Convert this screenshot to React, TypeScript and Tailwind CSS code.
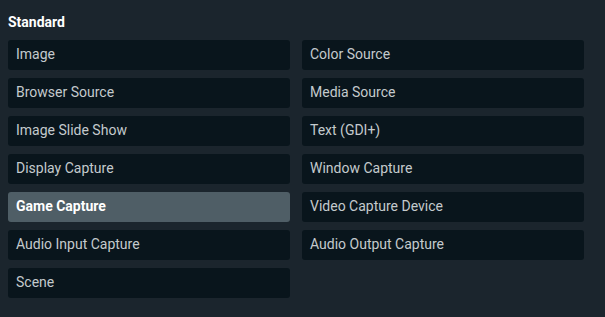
const left = [
  "Image",
  "Browser Source",
  "Image Slide Show",
  "Display Capture",
  "Game Capture",
  "Audio Input Capture",
  "Scene",
];

const right = [
  "Color Source",
  "Media Source",
  "Text (GDI+)",
  "Window Capture",
  "Video Capture Device",
  "Audio Output Capture",
];

function SourceItem({ label, active }: { label: string; active?: boolean }) {
  return (
    <div
      className={
        active
          ? "h-[30px] flex items-center px-2 pb-px rounded-[3px] bg-[#4f5e66] text-white font-bold"
          : "h-[30px] flex items-center px-2 pb-px rounded-[3px] bg-[#09151c] text-[#c4cacd]"
      }
    >
      {label}
    </div>
  );
}

export default function App() {
  return (
    <div
      className="w-[605px] h-[317px] bg-[#1b252d] pt-2 px-2 text-[14px]"
      style={{ fontFamily: "Roboto, sans-serif" }}
    >
      <h2 className="h-[28px] leading-[28px] font-bold text-white mb-[4px]">Standard</h2>
      <div className="grid grid-cols-[282px_282px] gap-x-3 gap-y-2">
        <div className="grid gap-2">
          {left.map((l) => (
            <SourceItem key={l} label={l} active={l === "Game Capture"} />
          ))}
        </div>
        <div className="grid gap-2 content-start">
          {right.map((r) => (
            <SourceItem key={r} label={r} />
          ))}
        </div>
      </div>
    </div>
  );
}
